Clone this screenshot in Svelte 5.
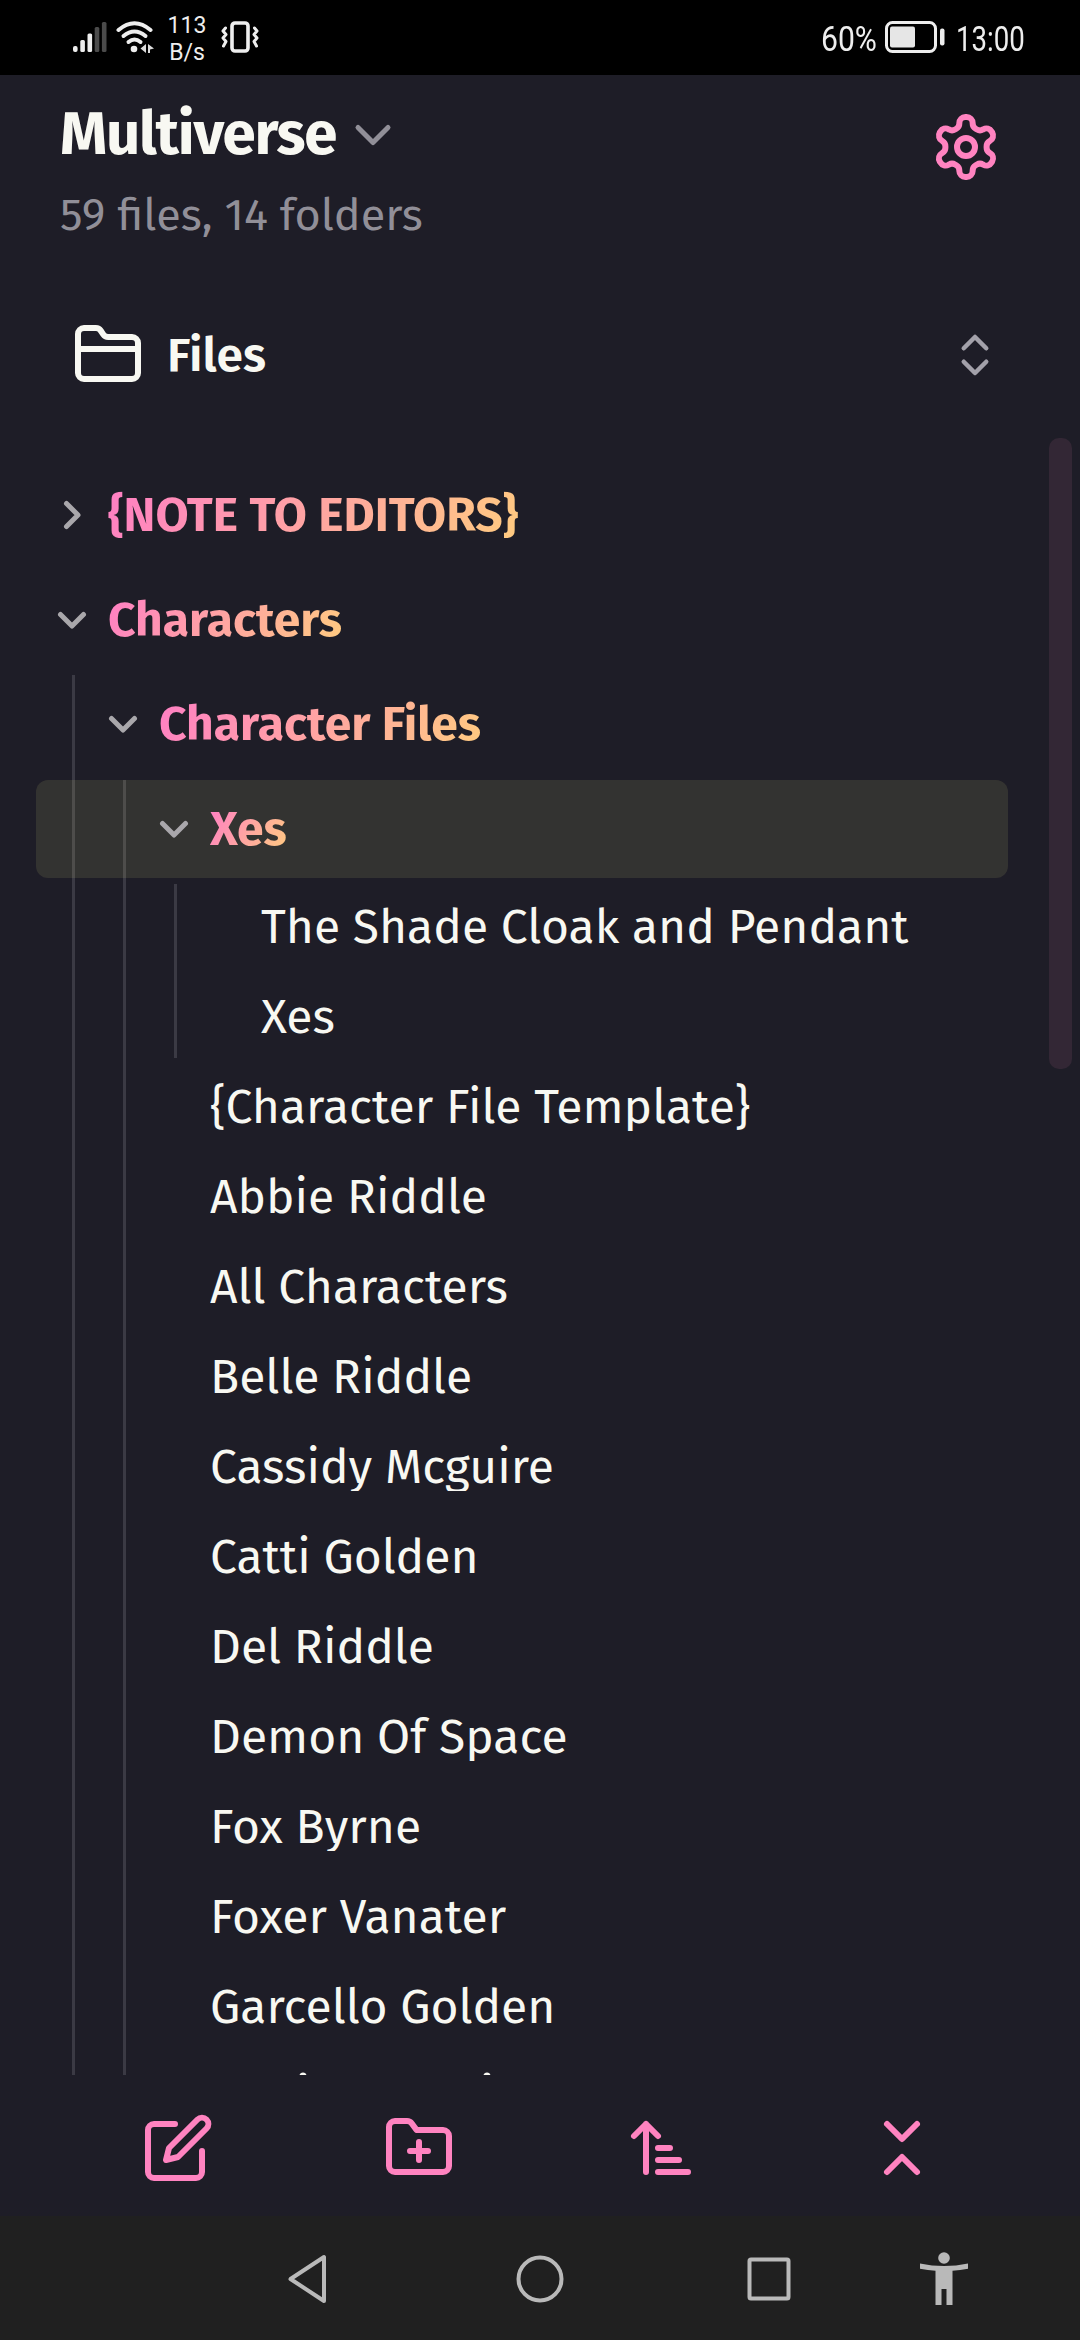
<script>
  const file = (name) => ({ name });
  const tree = [
    { name: '{NOTE TO EDITORS}', children: [], open: false },
    {
      name: 'Characters', open: true,
      children: [
        {
          name: 'Character Files', open: true,
          children: [
            {
              name: 'Xes', open: true, active: true,
              children: [file('The Shade Cloak and Pendant'), file('Xes')]
            },
            file('{Character File Template}'),
            file('Abbie Riddle'),
            file('All Characters'),
            file('Belle Riddle'),
            file('Cassidy Mcguire'),
            file('Catti Golden'),
            file('Del Riddle'),
            file('Demon Of Space'),
            file('Fox Byrne'),
            file('Foxer Vanater'),
            file('Garcello Golden')
          ]
        }
      ]
    }
  ];
</script>

{#snippet node(item, depth)}
  <div
    class="row"
    class:folder={item.children}
    class:root={depth === 0}
    class:active={item.active}
    style="--depth: {depth}"
  >
    {#if item.children}
      <svg class="twist" class:closed={!item.open} viewBox="0 0 30 30"><path d="M3.5 9.5 15 21 26.500 9.500" /></svg>
    {/if}
    <span class="name">{item.name}</span>
  </div>
  {#if item.children && item.open}
    <div class="children" class:first={depth === 0}>
      {#each item.children as child}
        {@render node(child, depth + 1)}
      {/each}
    </div>
  {/if}
{/snippet}

<div class="screen">
  <div class="status">
    <svg class="signal" viewBox="0 0 34 32">
      <g fill="#eee"><rect x="0" y="25" width="4.600" height="6" rx="2" /><rect x="7.300" y="19" width="4.600" height="12" rx="1.500" /><rect x="14.500" y="12.500" width="4.600" height="18.500" rx="1.500" /></g>
      <g fill="#4b4b4b"><rect x="21.700" y="6" width="4.600" height="25" rx="1.500" /><rect x="28.900" y="1" width="4.600" height="30" rx="1.500" /></g>
    </svg>
    <svg class="wifi" viewBox="0 0 38 32">
      <g fill="none" stroke="#eee" stroke-width="4" stroke-linecap="round"><path d="M2.500 9Q18.500-4.500 34.500 9" /><path d="M7.500 15Q18.500 6 29.500 15" /><path d="M12.500 21Q18.500 16 24.500 21" /></g>
      <circle cx="18" cy="28" r="3.300" fill="#eee" />
      <path d="M30 23v9l-5.500-4.500zM32 23l6 4.500-4 1V32h-2z" fill="#ddd" />
    </svg>
    <div class="rate"><span>113</span><span>B/s</span></div>
    <svg class="vibrate" viewBox="0 0 38 32">
      <g fill="none" stroke="#eee" stroke-linecap="round" stroke-linejoin="round">
        <rect x="11" y="2" width="16" height="28" rx="3" stroke-width="3.600" />
        <path stroke-width="3" d="m4.500 7-2.500 3 3 3.500-3 3.500 3 3.500-2.500 4.500M33.500 7l2.500 3-3 3.500 3 3.500-3 3.500 2.500 4.500" />
      </g>
    </svg>
    <div class="percent"><span>60%</span></div>
    <svg class="battery" viewBox="0 0 60 32">
      <rect x="1.500" y="1.500" width="49" height="29" rx="6" fill="none" stroke="#eee" stroke-width="3" />
      <rect x="5" y="5.500" width="25" height="21" rx="2" fill="#e6e6e6" />
      <rect x="55" y="7.500" width="4.500" height="17" rx="2" fill="#eee" />
    </svg>
    <div class="clock"><span>13:00</span></div>
  </div>

  <header>
    <div class="vault">
      <div class="title"><h1>Multiverse</h1>
        <svg class="drop" viewBox="0 0 38 24"><path d="m4 4.500 15 15 15-15" /></svg>
      </div>
      <p>59 files, 14 folders</p>
    </div>
    <svg class="icon pink" viewBox="0 0 24 24">
      <path d="M12.220 2h-.44a2 2 0 0 0-2 2v.18a2 2 0 0 1-1 1.730l-.43.25a2 2 0 0 1-2 0l-.15-.08a2 2 0 0 0-2.730.73l-.22.38a2 2 0 0 0 .73 2.730l.15.1a2 2 0 0 1 1 1.720v.51a2 2 0 0 1-1 1.740l-.15.09a2 2 0 0 0-.73 2.730l.22.38a2 2 0 0 0 2.730.73l.15-.08a2 2 0 0 1 2 0l.43.25a2 2 0 0 1 1 1.730V20a2 2 0 0 0 2 2h.44a2 2 0 0 0 2-2v-.18a2 2 0 0 1 1-1.730l.43-.25a2 2 0 0 1 2 0l.15.08a2 2 0 0 0 2.730-.73l.22-.39a2 2 0 0 0-.73-2.730l-.15-.08a2 2 0 0 1-1-1.740v-.5a2 2 0 0 1 1-1.740l.15-.09a2 2 0 0 0 .73-2.730l-.22-.38a2 2 0 0 0-2.730-.73l-.15.08a2 2 0 0 1-2 0l-.43-.25a2 2 0 0 1-1-1.730V4a2 2 0 0 0-2-2z" />
      <circle cx="12" cy="12" r="3" />
    </svg>
  </header>

  <div class="switcher">
    <svg class="icon" viewBox="0 0 24 24"><path d="M20 20a2 2 0 0 0 2-2V8a2 2 0 0 0-2-2h-7.900a2 2 0 0 1-1.690-.9L9.600 3.900A2 2 0 0 0 7.930 3H4a2 2 0 0 0-2 2v13a2 2 0 0 0 2 2ZM2 10h20" /></svg>
    <span>Files</span>
    <svg class="updown" viewBox="0 0 24 24"><path d="m7 15 5 5 5-5M7 9l5-5 5 5" /></svg>
  </div>

  <main>
    <div class="tree">
      {#each tree as item}
        {@render node(item, 0)}
      {/each}
      <div class="guides">
        <i></i><i></i>
        <svg class="next" viewBox="0 0 200 8"><g fill="#f8f8f2"><circle cx="4" cy="4" r="3.500" /><circle cx="188" cy="4" r="3.500" /></g></svg>
      </div>
    </div>
    <div class="scroll"></div>
  </main>

  <div class="tools">
    <svg class="icon pink" viewBox="0 0 24 24"><path d="M11 4H4a2 2 0 0 0-2 2v14a2 2 0 0 0 2 2h14a2 2 0 0 0 2-2v-7" /><path d="M18.500 2.500a2.121 2.121 0 0 1 3 3L12 15l-4 1 1-4Z" /></svg>
    <svg class="icon pink" viewBox="0 0 24 24"><path d="M4 20h16a2 2 0 0 0 2-2V8a2 2 0 0 0-2-2h-8.800l-1.600-2.200A2 2 0 0 0 7.930 3H4a2 2 0 0 0-2 2v13a2 2 0 0 0 2 2ZM12 10v6M9 13h6" /></svg>
    <svg class="icon pink" viewBox="0 0 24 24"><path d="m3 8 4-4 4 4M7 4v16M11 12h4M11 16h7M11 20h10" /></svg>
    <svg class="icon pink" viewBox="0 0 24 24"><path d="m7 20 5-5 5 5M7 4l5 5 5-5" /></svg>
  </div>

  <nav>
    <svg class="back" viewBox="0 0 48 56"><path d="M39 6v44L5.500 28Z" /></svg>
    <svg class="home" viewBox="0 0 56 56"><circle cx="28" cy="28" r="21.500" /></svg>
    <svg class="recent" viewBox="0 0 56 56"><rect x="8.500" y="8.500" width="39" height="39" rx="1.500" /></svg>
    <svg class="access" viewBox="0 0 56 56"><circle cx="28" cy="7" r="5.800" /><path d="M4 12.500q24 5 48 0v5.200q-8 1.500-15.500 2V54h-6V38h-5v16h-6V19.700Q12 19.200 4 17.700Z" /></svg>
  </nav>
</div>

<style>
  :global(body) { margin: 0; background: #1e1d27; }
  .screen {
    width: 1080px; height: 2340px; overflow: hidden;
    display: flex; flex-direction: column;
    background: #1e1d27; color: #f8f8f2;
    font-family: 'Fira Sans', 'Noto Sans', sans-serif;
  }
  svg { flex: none; display: block; }
  .status {
    height: 75px; flex: none; background: #000; color: #eee;
    display: flex; align-items: flex-start; box-sizing: border-box; padding-left: 73px;
    font-family: Roboto, sans-serif;
  }
  .signal { width: 34px; height: 32px; margin-top: 21px; }
  .wifi { width: 38px; height: 32px; margin: 21px 0 0 9px; }
  .rate {
    width: 42px; margin: 12px 0 0 12px; display: flex; flex-direction: column; align-items: center;
    font-size: 23px; line-height: 27px;
  }
  .vibrate { width: 38px; height: 32px; margin: 21px 0 0 13px; }
  .percent, .clock { font-size: 35px; line-height: 40px; margin-top: 20px; white-space: nowrap; }
  .percent { width: 56px; margin-left: 562px; }
  .percent span { display: inline-block; transform: scaleX(0.86); transform-origin: left; }
  .battery { width: 60px; height: 32px; margin: 21px 0 0 8px; }
  .clock { margin-left: 11px; }
  .clock span { display: inline-block; transform: scaleX(0.79); transform-origin: left; }

  header {
    height: 225px; flex: none; box-sizing: border-box; padding: 21px 78px 0 60px;
    display: flex; justify-content: space-between;
  }
  header > .icon { margin-top: 15px; }
  .title { display: flex; align-items: center; height: 77px; gap: 18px; }
  h1 { margin: 0; font-size: 60px; line-height: 77px; font-weight: 700; letter-spacing: -1.200px; }
  .drop { width: 38px; height: 24px; }
  .drop path, .updown path, .twist path, .icon { fill: none; stroke-linecap: round; stroke-linejoin: round; }
  .drop path { stroke: #918f98; stroke-width: 5; }
  p { margin: 12px 0 0; font-size: 45px; line-height: 60px; color: #918f98; }
  .icon { width: 72px; height: 72px; stroke: currentColor; stroke-width: 2; }
  .pink { color: #ff83c0; }

  .switcher {
    height: 110px; flex: none; display: flex; align-items: center; padding: 0 78px 0 72px;
    font-size: 48px; font-weight: 600;
  }
  .switcher span { flex: 1; margin-left: 23px; line-height: 60px; }
  .updown { width: 54px; height: 54px; }
  .updown path { stroke: #a3a1aa; stroke-width: 2; }

  main { height: 1637px; flex: none; margin-top: 28px; display: flex; justify-content: space-between; overflow: hidden; }
  .tree { width: 972px; margin-left: 36px; padding-top: 28px; }
  .row {
    height: 84px; width: 972px; box-sizing: border-box; margin-bottom: 6px;
    margin-left: calc(12px - 51px * var(--depth));
    padding-left: calc(72px + 51px * var(--depth));
    padding-top: 2px;
    display: flex; align-items: center;
  }
  .folder { height: 98.500px; padding-top: 0; padding-left: calc(21px + 51px * var(--depth)); gap: 21px; }
  .root { margin-left: 0; }
  .active { background: rgba(241, 250, 140, 0.1); border-radius: 12px; }
  .name { font-size: 48px; line-height: 48px; white-space: nowrap; clip-path: inset(0); }
  .folder .name {
    font-weight: 700; color: transparent;
    background: linear-gradient(120deg, #ff7fc4, #ffcb80);
    background-clip: text;
    -webkit-background-clip: text;
  }
  .twist { width: 30px; height: 30px; }
  .twist path { stroke: #a9a7ab; stroke-width: 5; }
  .closed { transform: rotate(-90deg); }
  .children { width: 900px; margin-left: 48px; margin-bottom: 6px; border-left: 3px solid #3b3a44; }
  .first { margin-left: 36px; }
  .children > :global(:last-child) { margin-bottom: 0; }
  .guides { display: flex; gap: 48px; margin: -6px 0 0 36px; height: 40px; }
  .guides i { width: 3px; background: #3b3a44; }
  .next { width: 200px; height: 8px; margin: 24px 0 0 125px; }
  .scroll { width: 23px; height: 631px; margin-right: 8px; border-radius: 10px; background: #332735; }

  .tools { height: 141px; flex: none; display: flex; justify-content: space-around; box-sizing: border-box; padding: 37px 57px 0; }
  nav { flex: 1; background: #202020; display: flex; align-items: center; padding-top: 2px; padding-left: 285px; }
  nav svg { width: 56px; height: 56px; fill: none; stroke: #b9b9b9; stroke-width: 4; stroke-linejoin: round; }
  nav .back { width: 48px; }
  .home { margin-left: 179px; }
  .recent { margin-left: 173px; }
  nav .access { margin-left: 119px; fill: #b9b9b9; stroke: none; }
</style>
